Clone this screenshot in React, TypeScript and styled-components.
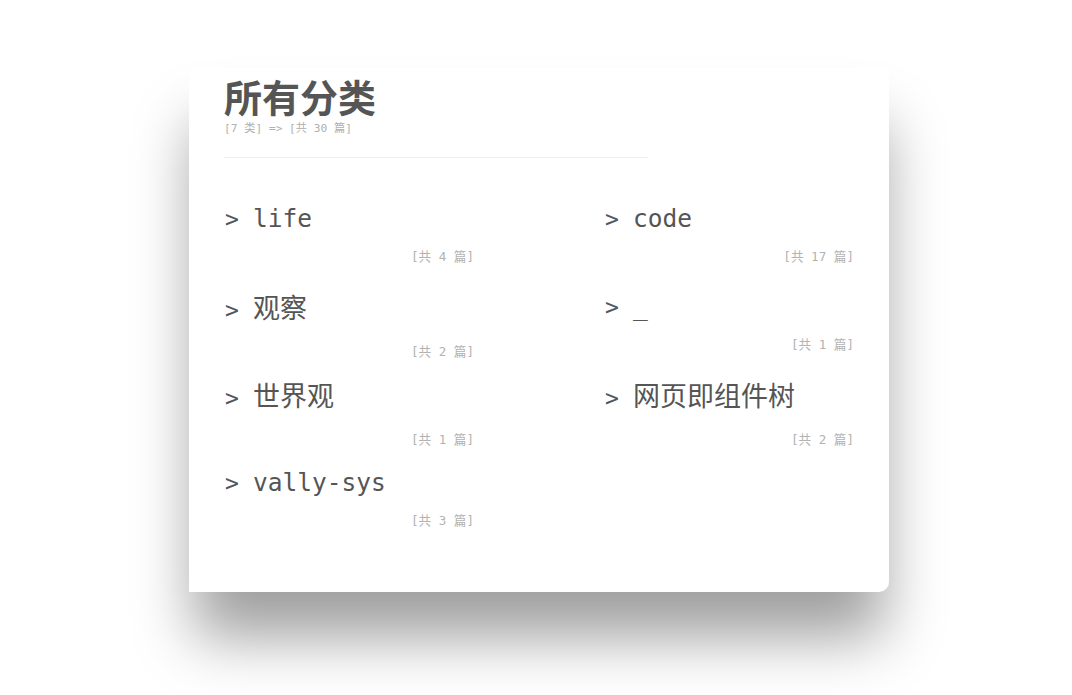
import React from "react";
import styled, { createGlobalStyle } from "styled-components";

const GlobalStyle = createGlobalStyle`
  html, body {
    margin: 0;
    padding: 0;
    background: #fff;
  }
  body {
    font-family: "DejaVu Sans Mono", "Noto Sans CJK SC", monospace;
    color: #555;
  }
`;

const Page = styled.div`
  width: 1072px;
  height: 695px;
  overflow: hidden;
  padding-top: 68px;
  box-sizing: border-box;
`;

const Card = styled.section`
  width: 700px;
  margin-left: 189px;
  box-sizing: border-box;
  padding: 6px 35px 59px;
  background: #fff;
  border-bottom-right-radius: 10px;
  box-shadow: 0 50px 60px -5px rgba(0, 0, 0, 0.38);
`;

const Header = styled.header`
  width: 424px;
  padding-bottom: 20px;
  border-bottom: 1px solid #eee;
`;

const Title = styled.h1`
  margin: 0;
  font-family: "Noto Sans CJK SC", sans-serif;
  font-weight: 700;
  font-size: 38px;
  line-height: 44px;
  color: #555;
`;

const Summary = styled.div`
  margin-top: 3px;
  font-size: 11.2px;
  line-height: 16px;
  color: #b0b0b0;
`;

const Grid = styled.ul`
  list-style: none;
  margin: 46px 0 0;
  padding: 0;
  display: grid;
  grid-template-columns: repeat(2, 250px);
  column-gap: 130px;
  row-gap: 23px;
  align-items: start;
`;

const Item = styled.li`
  height: 65px;
  display: flex;
  flex-direction: column;
`;

const NameLine = styled.div<{ $cjk: boolean }>`
  white-space: nowrap;
  font-size: ${(p) => (p.$cjk ? 27 : 24.5)}px;
  line-height: ${(p) => (p.$cjk ? 34 : 30)}px;
  color: #555;
`;

const Arrow = styled.span`
  display: inline-block;
  font-family: "DejaVu Sans Mono", monospace;
  font-size: 23px;
  width: 15px;
  margin: 0 13px 0 1px;
  color: #4f5862;
`;

const Name = styled.span`
  font-family: "DejaVu Sans Mono", "Noto Sans CJK SC", monospace;
`;

const Count = styled.div<{ $cjk: boolean }>`
  margin-top: ${(p) => (p.$cjk ? 18 : 16)}px;
  font-size: 12.6px;
  line-height: 14px;
  text-align: right;
  color: #b3b3b3;
`;

type Category = { name: string; count: number };

const categories: Category[] = [
  { name: "life", count: 4 },
  { name: "code", count: 17 },
  { name: "观察", count: 2 },
  { name: "_", count: 1 },
  { name: "世界观", count: 1 },
  { name: "网页即组件树", count: 2 },
  { name: "vally-sys", count: 3 },
];

const isCjk = (s: string) => /[\u4e00-\u9fff]/.test(s);

function CategoryItem({ name, count }: Category) {
  const cjk = isCjk(name);
  return (
    <Item>
      <NameLine $cjk={cjk}>
        <Arrow>&gt;</Arrow>
        <Name>{name}</Name>
      </NameLine>
      <Count $cjk={cjk}>[共 {count} 篇]</Count>
    </Item>
  );
}

export default function App() {
  const total = categories.reduce((sum, c) => sum + c.count, 0);
  return (
    <>
      <GlobalStyle />
      <Page>
        <Card>
          <Header>
            <Title>所有分类</Title>
            <Summary>
              [{categories.length} 类] =&gt; [共 {total} 篇]
            </Summary>
          </Header>
          <Grid>
            {categories.map((c) => (
              <CategoryItem key={c.name} {...c} />
            ))}
          </Grid>
        </Card>
      </Page>
    </>
  );
}
